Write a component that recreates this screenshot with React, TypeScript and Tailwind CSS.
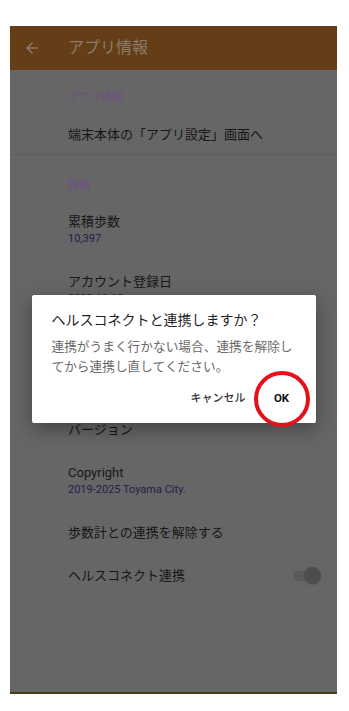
import { ReactNode } from "react";

// ─── Types ────────────────────────────────────────────────────────────────────

type RowProps = {
  title: string;
  summary?: string;
  right?: ReactNode;
};

const FONT = "font-['Roboto','Noto_Sans_CJK_JP',sans-serif]";

// ─── Pieces ───────────────────────────────────────────────────────────────────

function Category({ label, top }: { label: string; top: string }) {
  return (
    <div className={`pl-[58px] ${top} pb-[6px]`}>
      <p className="text-[11px] leading-[16px] text-[#6f4f88]">{label}</p>
    </div>
  );
}

function Row({ title, summary, right }: RowProps) {
  if (!summary) {
    return (
      <div className="h-[43px] pl-[58px] pr-[20px] flex items-center justify-between">
        <p className="text-[13px] leading-[18px] text-[#161616]">{title}</p>
        {right}
      </div>
    );
  }
  return (
    <div className="h-[60px] pl-[58px] pr-[16px] pt-[13px]">
      <p className="text-[13px] leading-[18px] text-[#161616]">{title}</p>
      <p className="text-[11px] leading-[15px] text-[#22204a]">{summary}</p>
    </div>
  );
}

function Switch() {
  return (
    <div className="relative w-[24px] h-[18px] flex items-center">
      <span className="w-[22px] h-[10px] rounded-full bg-[#5b5b5b]" />
      <span className="absolute right-[-4px] w-[17px] h-[17px] rounded-full bg-[#4d4d4d] shadow-sm" />
    </div>
  );
}

function ArrowBack() {
  return (
    <svg width="18" height="18" viewBox="0 0 24 24" fill="#8c7c6c">
      <path d="M20 11H7.83l5.59-5.59L12 4l-8 8 8 8 1.41-1.41L7.83 13H20v-2z" />
    </svg>
  );
}

// ─── App ──────────────────────────────────────────────────────────────────────

export default function App() {
  return (
    <div className={`w-[349px] h-[711px] bg-white pt-[26px] pl-[10px] ${FONT}`}>
      <div className="relative w-[327px] h-[666px] bg-[#666666] flex flex-col">
        {/* Toolbar */}
        <div className="h-[44px] bg-[#653e18] flex items-center pl-[13px] shrink-0">
          <ArrowBack />
          <h1 className="ml-[27px] text-[16px] leading-[20px] text-[#8c7c6c]">アプリ情報</h1>
        </div>

        <Category label="アプリ情報" top="pt-[20px]" />
        <div className="h-[42px] pl-[58px] pt-[4px] flex items-center">
          <p className="text-[13px] leading-[18px] text-[#161616]">端末本体の「アプリ設定」画面へ</p>
        </div>
        <div className="h-px bg-[#5e5e5e]" />

        <Category label="詳細" top="pt-[23px]" />
        <Row title="累積歩数" summary="10,397" />
        <Row title="アカウント登録日" summary="2023.11.10" />
        {/* rows hidden behind the dialog */}
        <div className="h-[88px]" />
        <Row title="バージョン" />
        <Row title="Copyright" summary="2019-2025 Toyama City." />
        <Row title="歩数計との連携を解除する" />
        <Row title="ヘルスコネクト連携" right={<Switch />} />

        {/* Dialog */}
        <div className="absolute inset-0 flex items-center justify-center">
          <div className="w-[284px] h-[128px] bg-white rounded-[2px] shadow-[0_6px_20px_rgba(0,0,0,0.35)] flex flex-col">
            <h2 className="pt-[15px] px-[20px] text-[14px] leading-[20px] text-[#1f1f1f]">
              ヘルスコネクトと連携しますか？
            </h2>
            <div className="pt-[7px] px-[20px] text-[12.7px] leading-[20px] text-[#6a6a6a] whitespace-nowrap">
              <p>連携がうまく行かない場合、連携を解除し</p>
              <p>てから連携し直してください。</p>
            </div>
            <div className="mt-auto mb-[6px] pr-[12px] flex justify-end items-center gap-[6px]">
              <button className="h-[36px] px-[8px] text-[11px] font-medium text-[#333333]">キャンセル</button>
              <button className="relative h-[36px] w-[44px] text-[11.5px] font-bold text-[#111111]">
                OK
                <span className="absolute left-1/2 top-1/2 -translate-x-1/2 -translate-y-1/2 w-[56px] h-[56px] rounded-full border-[4px] border-[#e3121a]" />
              </button>
            </div>
          </div>
        </div>
      </div>
      <div className="w-[327px] h-[2px] bg-[#4a3a18]" />
    </div>
  );
}
